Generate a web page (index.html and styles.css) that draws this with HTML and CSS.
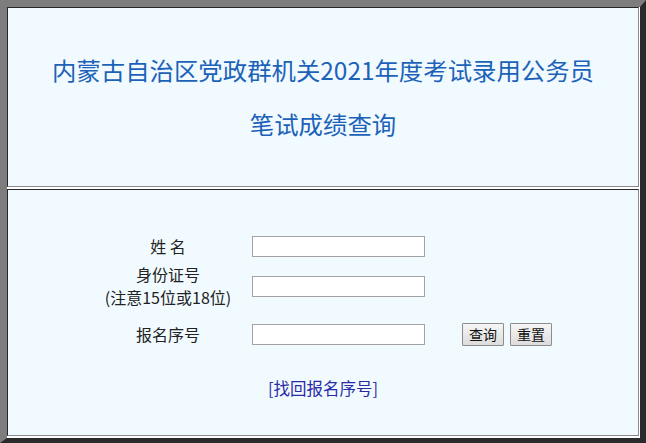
FILE: index.html
```html
<!DOCTYPE html>
<html lang="zh-CN">

<head>
    <meta charset="UTF-8">
    <title>笔试成绩查询</title>
    <link rel="stylesheet" href="styles.css">
</head>

<body>
    <div class="frame">
        <div class="cell header">
            <p class="title">内蒙古自治区党政群机关2021年度考试录用公务员</p>
            <p class="title">笔试成绩查询</p>
        </div>

        <div class="cell query">
            <form class="form">
                <div class="label">姓&nbsp;名</div>
                <input class="field" type="text">
                <div></div>

                <div class="label">身份证号<br>(注意15位或18位)</div>
                <input class="field" type="text">
                <div></div>

                <div class="label">报名序号</div>
                <input class="field" type="text">
                <div class="buttons">
                    <button type="button" class="btn">查询</button>
                    <button type="reset" class="btn">重置</button>
                </div>
            </form>

            <div class="find">
                <a href="#">[找回报名序号]</a>
            </div>
        </div>
    </div>
</body>

</html>
```

FILE: styles.css
```css
html,
body {
    margin: 0;
    padding: 0;
}

body {
    font-family: "Noto Sans CJK SC", "Noto Sans", sans-serif;
    color: #222;
    width: 646px;
    height: 443px;
    overflow: hidden;
}

.frame {
    display: flex;
    flex-direction: column;
    gap: 2px;
    height: 443px;
    box-sizing: border-box;
    border-style: solid;
    border-width: 7px 6px 5px 7px;
    border-color: #7d7d7d #2b2b2b #2b2b2b #7d7d7d;
    padding: 0 1px 2px 0;
}

.cell {
    background: #f1faff;
    border: 1px solid;
    border-color: #262626 #8a8a8a #8a8a8a #262626;
    box-sizing: border-box;
}

.header {
    height: 180px;
    padding-top: 35px;
    text-align: center;
}

.title {
    margin: 0;
    font-size: 24.4px;
    line-height: 54px;
    color: #1c62b9;
}

.query {
    flex: 1;
    padding-top: 41px;
}

.form {
    display: grid;
    grid-template-columns: 136px 173px auto;
    grid-template-rows: 31px 48px 48px;
    column-gap: 16px;
    align-items: center;
    padding-left: 92px;
    margin: 0;
}

.label {
    text-align: center;
    font-size: 16px;
    line-height: 23px;
}

.field {
    width: 173px;
    height: 21px;
    box-sizing: border-box;
    border: 1px solid #a3a3a3;
    background: #fff;
    margin: 0;
    padding: 0 3px;
}

.buttons {
    display: flex;
    gap: 6px;
    margin-left: 21px;
}

.btn {
    height: 23px;
    padding: 0 6px;
    font-family: "Noto Sans CJK SC", sans-serif;
    font-size: 14px;
    color: #111;
    background: linear-gradient(#f6f6f6, #dcdcdc);
    border: 1px solid #8c8c8c;
    border-radius: 1px;
}

.find {
    margin-top: 19px;
    text-align: center;
    font-size: 16.5px;
    line-height: 22px;
}

.find a {
    color: #2a2aa8;
    text-decoration: none;
}
```
